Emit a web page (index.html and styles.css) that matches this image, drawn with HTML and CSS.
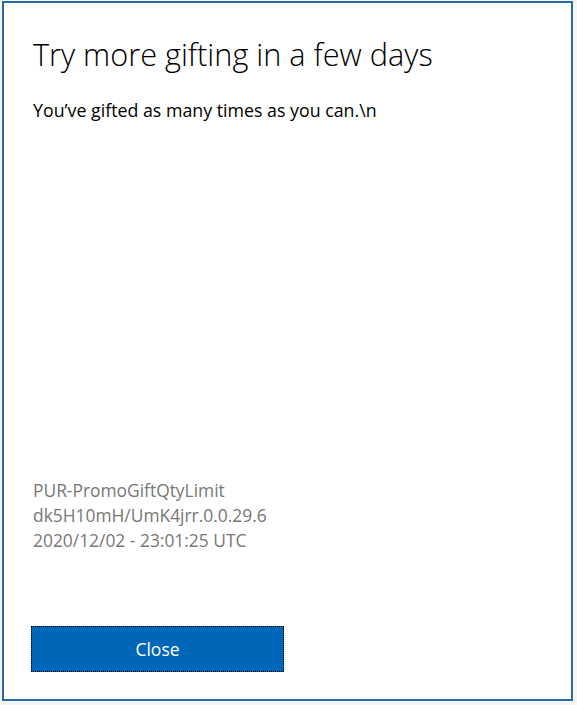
FILE: index.html
```html
<!DOCTYPE html>
<html>
<head>
  <title>Try more gifting in a few days</title>
  <meta charset="UTF-8"/>
  <link rel="stylesheet" href="styles.css">
</head>

<body>
<div class="dialog">
  <main class="content">
    <h1>Try more gifting in a few days</h1>
    <p class="message">You’ve gifted as many times as you can.\n</p>

    <div class="details">
      <p>PUR-PromoGiftQtyLimit</p>
      <p>dk5H10mH/UmK4jrr.0.0.29.6</p>
      <p>2020/12/02 - 23:01:25 UTC</p>
    </div>
  </main>

  <footer class="actions">
    <button id="close-btn">Close</button>
  </footer>
</div>
</body>
</html>
```

FILE: styles.css
```css
* {
  box-sizing: border-box;
}

html,
body {
  height: 100%;
}

body {
  font-family: "Open Sans", "Noto Sans", sans-serif;
  margin: 0;
  padding: 1px 4px 4px 2px;
  background-color: #f4f6f8;
}

/* 对话框 */
.dialog {
  height: 100%;
  background-color: #fff;
  border: 2px solid #2a6aa0;
  display: flex;
  flex-direction: column;
  padding: 0 29px;
}

.content {
  flex-grow: 1;
  display: flex;
  flex-direction: column;
}

.content h1 {
  color: #000;
  font-size: 30.7px;
  font-weight: 300;
  margin: 31px 0 0;
  line-height: 40px;
  white-space: nowrap;
}

.message {
  color: #000;
  font-size: 17.8px;
  margin: 24px 0 0;
  line-height: 24px;
}

/* 错误详情 */
.details {
  margin-top: auto;
  color: #777;
  font-size: 17.4px;
  line-height: 25px;
}

.details p {
  margin: 0;
}

/* 底部按钮 */
.actions {
  padding: 73px 0 27px;
}

button#close-btn {
  width: 253px;
  height: 46px;
  margin-left: -2px;
  background-color: #0067b8;
  color: #fff;
  border: 1px dotted #000;
  font-family: inherit;
  font-size: 17.5px;
  cursor: pointer;
  padding: 0;
}
```
